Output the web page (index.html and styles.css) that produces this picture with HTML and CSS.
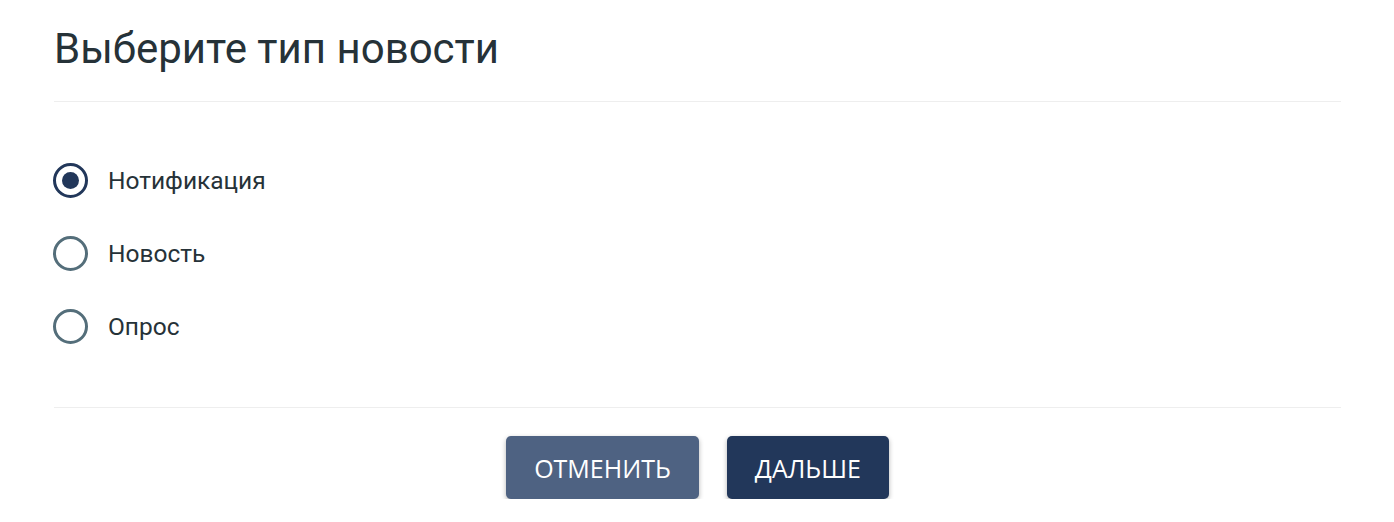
FILE: index.html
```html
<!DOCTYPE html>
<html lang="ru">
<head>
    <meta charset="UTF-8">
    <title>Выберите тип новости</title>
    <link rel="stylesheet" href="styles.css">
</head>
<body>

    <div class="dialog">
        <h1 class="dialog-title">Выберите тип новости</h1>

        <div class="options">
            <label class="option">
                <input type="radio" name="type" value="notification" checked>
                <span class="radio"></span>
                <span class="option-text">Нотификация</span>
            </label>
            <label class="option">
                <input type="radio" name="type" value="news">
                <span class="radio"></span>
                <span class="option-text">Новость</span>
            </label>
            <label class="option">
                <input type="radio" name="type" value="poll">
                <span class="radio"></span>
                <span class="option-text">Опрос</span>
            </label>
        </div>

        <div class="actions">
            <button type="button" class="btn btn-cancel">Отменить</button>
            <button type="button" class="btn btn-next">Дальше</button>
        </div>
    </div>

</body>
</html>
```

FILE: styles.css
```css
body {
    margin: 0;
    background-color: #fff;
    font-family: Roboto, "Noto Sans", sans-serif;
    color: #263238;
}

.dialog {
    padding: 0 53px 0 54px;
}

.dialog-title {
    margin: 0;
    padding: 23px 0 26px;
    font-size: 42px;
    font-weight: 400;
    line-height: 52px;
    border-bottom: 1px solid #eeeeee;
}

.options {
    display: flex;
    flex-direction: column;
    gap: 38px;
    padding: 61px 0 63px;
    border-bottom: 1px solid #eeeeee;
}

.option {
    display: flex;
    align-items: center;
    gap: 20px;
    height: 35px;
    cursor: pointer;
}

.option input {
    display: none;
}

.radio {
    box-sizing: border-box;
    width: 35px;
    height: 35px;
    margin-left: -1px;
    border: 3px solid #546e7a;
    border-radius: 50%;
    display: flex;
    align-items: center;
    justify-content: center;
}

.option input:checked + .radio {
    border-color: #22375a;
}

.option input:checked + .radio::after {
    content: "";
    width: 17px;
    height: 17px;
    border-radius: 50%;
    background-color: #22375a;
}

.option-text {
    font-size: 24.5px;
}

.actions {
    display: flex;
    justify-content: center;
    gap: 28px;
    padding-top: 28px;
}

.btn {
    height: 63px;
    padding: 0 28px;
    border: none;
    border-radius: 5px;
    font-family: "Open Sans", "Noto Sans", sans-serif;
    font-size: 25px;
    font-weight: 500;
    text-transform: uppercase;
    color: #fff;
    box-shadow: 0 2px 5px rgba(0, 0, 0, 0.3);
    cursor: pointer;
}

.btn-cancel {
    background-color: #4e6282;
}

.btn-next {
    background-color: #22375a;
}
```
